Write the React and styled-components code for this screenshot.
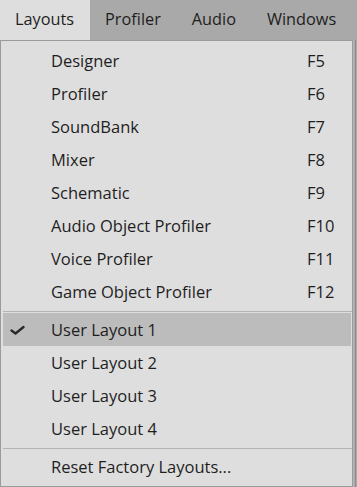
import React from "react";
import styled, { createGlobalStyle } from "styled-components";

const GlobalStyle = createGlobalStyle`
  html, body {
    margin: 0;
    padding: 0;
    background: #a9a9a9;
  }
  body {
    font-family: "Open Sans", "Noto Sans", "Liberation Sans", sans-serif;
  }
`;

const Page = styled.div`
  width: 357px;
  height: 487px;
  background: #a9a9a9;
  display: flex;
  flex-direction: column;
  overflow: hidden;
`;

const MenuBar = styled.div`
  display: flex;
  height: 40px;
  flex-shrink: 0;
`;

const MenuTitle = styled.div`
  display: flex;
  align-items: center;
  padding: 0 16px 2px 15px;
  font-size: 16.3px;
  color: #1e1e1e;
  white-space: nowrap;
  background: ${(p) => (p.$open ? "#dedede" : "transparent")};
`;

const DropRow = styled.div`
  display: flex;
  flex: 1;
`;

const Menu = styled.div`
  width: 353px;
  flex-shrink: 0;
  background: #dedede;
  border: 1px solid #9b9b9b;
  padding: 3px 0 2px;
  box-sizing: border-box;
  height: 447px;
`;

const Strip = styled.div`
  flex: 1;
  border-left: 1px solid #b7b7b7;
  border-right: 1px solid #8e8e8e;
  margin-right: 1px;
`;

const Item = styled.div`
  display: flex;
  align-items: center;
  height: 33px;
  margin: 0 1px 0 2px;
  background: ${(p) => (p.$active ? "#bcbcbc" : "transparent")};
  font-size: 16.5px;
  color: #1e1e1e;
  white-space: nowrap;
`;

const CheckCell = styled.div`
  width: 48px;
  display: flex;
  align-items: center;
  padding-left: 6px;
  box-sizing: border-box;
`;

const Label = styled.span`
  flex: 1;
`;

const Shortcut = styled.span`
  width: 44px;
`;

const Separator = styled.div`
  height: 1px;
  background: #b4b4b4;
  margin: 3px 0 1px 2px;
`;

const Check = () => (
  <svg width="18" height="14" viewBox="0 0 18 14">
    <path
      d="M2.5 7.5 L6.5 10.5 L14.5 4"
      fill="none"
      stroke="#2a2a2a"
      strokeWidth="2.4"
      strokeLinecap="round"
      strokeLinejoin="round"
    />
  </svg>
);

const views = [
  ["Designer", "F5"],
  ["Profiler", "F6"],
  ["SoundBank", "F7"],
  ["Mixer", "F8"],
  ["Schematic", "F9"],
  ["Audio Object Profiler", "F10"],
  ["Voice Profiler", "F11"],
  ["Game Object Profiler", "F12"],
];

const userLayouts = ["User Layout 1", "User Layout 2", "User Layout 3", "User Layout 4"];

export default function App() {
  return (
    <Page>
      <GlobalStyle />
      <MenuBar>
        <MenuTitle $open>Layouts</MenuTitle>
        <MenuTitle>Profiler</MenuTitle>
        <MenuTitle>Audio</MenuTitle>
        <MenuTitle>Windows</MenuTitle>
      </MenuBar>
      <DropRow>
        <Menu>
          {views.map(([name, key]) => (
            <Item key={name}>
              <CheckCell />
              <Label>{name}</Label>
              <Shortcut>{key}</Shortcut>
            </Item>
          ))}
          <Separator />
          {userLayouts.map((name, i) => (
            <Item key={name} $active={i === 0}>
              <CheckCell>{i === 0 && <Check />}</CheckCell>
              <Label>{name}</Label>
            </Item>
          ))}
          <Separator />
          <Item>
            <CheckCell />
            <Label>Reset Factory Layouts...</Label>
          </Item>
        </Menu>
        <Strip />
      </DropRow>
    </Page>
  );
}
